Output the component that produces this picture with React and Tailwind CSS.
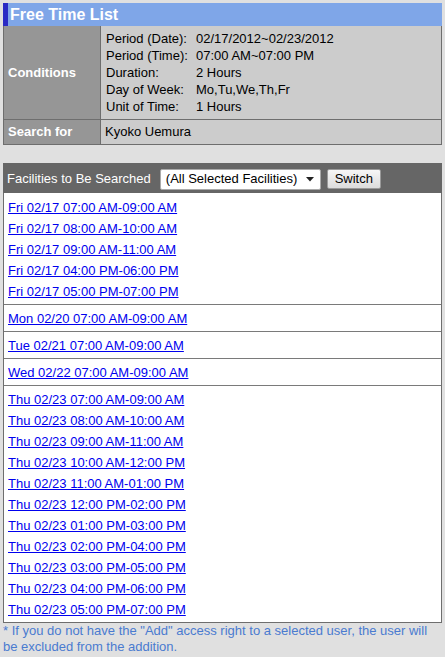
export default function App() {
  const sections = [
    [
      "Fri 02/17 07:00 AM-09:00 AM",
      "Fri 02/17 08:00 AM-10:00 AM",
      "Fri 02/17 09:00 AM-11:00 AM",
      "Fri 02/17 04:00 PM-06:00 PM",
      "Fri 02/17 05:00 PM-07:00 PM",
    ],
    ["Mon 02/20 07:00 AM-09:00 AM"],
    ["Tue 02/21 07:00 AM-09:00 AM"],
    ["Wed 02/22 07:00 AM-09:00 AM"],
    [
      "Thu 02/23 07:00 AM-09:00 AM",
      "Thu 02/23 08:00 AM-10:00 AM",
      "Thu 02/23 09:00 AM-11:00 AM",
      "Thu 02/23 10:00 AM-12:00 PM",
      "Thu 02/23 11:00 AM-01:00 PM",
      "Thu 02/23 12:00 PM-02:00 PM",
      "Thu 02/23 01:00 PM-03:00 PM",
      "Thu 02/23 02:00 PM-04:00 PM",
      "Thu 02/23 03:00 PM-05:00 PM",
      "Thu 02/23 04:00 PM-06:00 PM",
      "Thu 02/23 05:00 PM-07:00 PM",
    ],
  ];
  const conds = [
    ["Period (Date):", "02/17/2012~02/23/2012"],
    ["Period (Time):", "07:00 AM~07:00 PM"],
    ["Duration:", "2 Hours"],
    ["Day of Week:", "Mo,Tu,We,Th,Fr"],
    ["Unit of Time:", "1 Hours"],
  ];
  return (
    <div className="min-h-[657px] bg-[#e0e0e0] px-[3px] pt-[3px] font-['Liberation_Sans',Arial,sans-serif] text-[13px] text-black">
      <div className="flex h-[23px] items-center border-l-[5px] border-[#2a2ac4] bg-[#7fa6e8] pl-[2px] text-[16px] font-bold text-white">
        Free Time List
      </div>
      <div className="grid grid-cols-[97px_1fr] border-x border-b border-[#6e6e6e]">
        <div className="flex items-center border-r border-b border-[#6e6e6e] bg-[#969696] pl-[4px] font-bold text-white">
          Conditions
        </div>
        <div className="border-b border-[#6e6e6e] bg-[#cccccc] py-[4px] pl-[5px] leading-[17px]">
          {conds.map(([k, v]) => (
            <div key={k} className="grid grid-cols-[90px_1fr]">
              <span>{k}</span>
              <span>{v}</span>
            </div>
          ))}
        </div>
        <div className="flex h-[24px] items-center border-r border-[#6e6e6e] bg-[#969696] pl-[4px] font-bold text-white">
          Search for
        </div>
        <div className="flex h-[24px] items-center bg-[#cccccc] pl-[4px]">
          Kyoko Uemura
        </div>
      </div>
      <div className="mt-[18px] flex h-[30px] items-center bg-[#666666] pl-[4px] pt-[2px] text-white">
        <span>Facilities to Be Searched</span>
        <div className="ml-[9px] flex h-[21px] w-[161px] items-center justify-between rounded-[2px] border border-[#aaaaaa] bg-white pl-[5px] pr-[6px] text-black">
          <span>(All Selected Facilities)</span>
          <svg width="8" height="5" viewBox="0 0 8 5">
            <path d="M0 0h8L4 4.5z" fill="#222" />
          </svg>
        </div>
        <button className="ml-[6px] flex h-[20px] w-[54px] items-center justify-center rounded-[2px] border border-[#9a9a9a] bg-gradient-to-b from-[#f6f6f6] to-[#dcdcdc] text-black">
          Switch
        </button>
      </div>
      <div className="border-x border-b border-[#6e6e6e] bg-white">
        {sections.map((rows, i) => (
          <div
            key={i}
            className={`pb-[2px] pl-[4px] ${i > 0 ? "border-t border-[#7a7a7a] pt-[3px]" : "pt-[4px]"}`}
          >
            {rows.map((r) => (
              <div key={r} className="flex h-[21px] items-center">
                <a href="#" className="text-[#0000ee] underline">
                  {r}
                </a>
              </div>
            ))}
          </div>
        ))}
      </div>
      <div className="leading-[16px] text-[#4a7bd0]">
        * If you do not have the "Add" access right to a selected user, the user will be excluded from the addition.
      </div>
    </div>
  );
}
